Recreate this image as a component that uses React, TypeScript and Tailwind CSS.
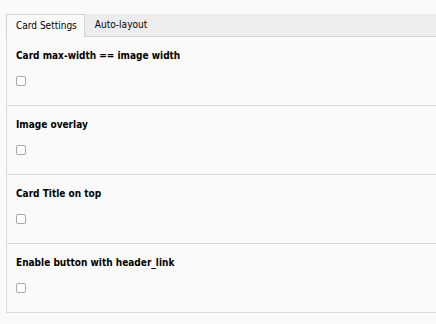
import React from "react";

const sections = [
  "Card max-width == image width",
  "Image overlay",
  "Card Title on top",
  "Enable button with header_link",
];

export default function App() {
  return (
    <div
      className="w-[436px] h-[324px] overflow-hidden bg-[#fafafa] pt-[14px] pl-[6px] text-black font-stretch-condensed"
      style={{ fontFamily: '"DejaVu Sans Condensed", "DejaVu Sans", Verdana, sans-serif' }}
    >
      <div className="w-[460px]">
        <div className="flex h-[23px] bg-[#ededed] border-b border-[#d4d4d4]">
          <div className="h-[23px] bg-[#fafafa] border-l border-t border-r border-[#d4d4d4] pl-[9px] pr-[7px] text-[10px] leading-[21px]">
            Card Settings
          </div>
          <div className="px-[10px] text-[10px] leading-[22px]">Auto-layout</div>
        </div>
        <div className="border-l border-[#dcdcdc]">
          {sections.map((s) => (
            <div key={s} className="h-[69px] border-b border-[#dcdcdc] pl-[9px] pt-[12px]">
              <div className="text-[10px] leading-[14px] font-bold">{s}</div>
              <div className="mt-[13px] w-[10px] h-[10px] rounded-[2px] border border-[#a8a8a8] bg-white" />
            </div>
          ))}
        </div>
      </div>
    </div>
  );
}
